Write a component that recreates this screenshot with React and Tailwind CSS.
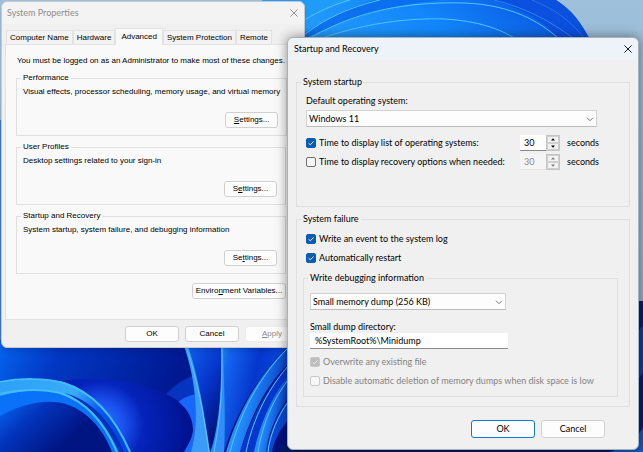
import React, { useState } from 'react';
import clsx from 'clsx';

const GROUPS = [
  { title: 'Performance', text: 'Visual effects, processor scheduling, memory usage, and virtual memory', label: ['', 'S', 'ettings...'] },
  { title: 'User Profiles', text: 'Desktop settings related to your sign-in', label: ['S', 'e', 'ttings...'] },
  { title: 'Startup and Recovery', text: 'System startup, system failure, and debugging information', label: ['Se', 't', 'tings...'] },
];

const TABS = ['Computer Name', 'Hardware', 'Advanced', 'System Protection', 'Remote'];

function Wallpaper() {
  return (
    <svg
      className="absolute inset-0 h-full w-full"
      viewBox="0 0 643 452"
      preserveAspectRatio="xMidYMid slice"
      aria-hidden="true"
    >
      <defs>
        <linearGradient id="sky" x1="0" y1="0" x2="0" y2="1">
          <stop offset="0" stopColor="#9fc0da" />
          <stop offset="1" stopColor="#8ea9bd" />
        </linearGradient>
        <linearGradient id="petal" x1="0" y1="0.6" x2="1" y2="0.4">
          <stop offset="0" stopColor="#2aa4fb" />
          <stop offset="0.55" stopColor="#1286fb" />
          <stop offset="1" stopColor="#0a4fdc" />
        </linearGradient>
        <linearGradient id="deep" x1="0" y1="0" x2="1" y2="0.15">
          <stop offset="0" stopColor="#0563ee" />
          <stop offset="0.2" stopColor="#0238c4" />
          <stop offset="0.6" stopColor="#001a94" />
          <stop offset="1" stopColor="#000a6c" />
        </linearGradient>
        <radialGradient id="lump" gradientUnits="userSpaceOnUse" cx="100" cy="425" r="96" gradientTransform="rotate(0)">
          <stop offset="0" stopColor="#2a7cff" />
          <stop offset="0.25" stopColor="#1a50ee" />
          <stop offset="0.45" stopColor="#0524bc" />
          <stop offset="1" stopColor="#000f88" />
        </radialGradient>
        <linearGradient id="ribbon" x1="0" y1="0" x2="1" y2="0.6">
          <stop offset="0" stopColor="#2da0f8" />
          <stop offset="0.5" stopColor="#38acf8" />
          <stop offset="0.75" stopColor="#0a58ec" />
          <stop offset="1" stopColor="#0348e8" />
        </linearGradient>
        <linearGradient id="hollow" x1="0" y1="0" x2="1" y2="0.5">
          <stop offset="0" stopColor="#0667f4" />
          <stop offset="0.35" stopColor="#0234bc" />
          <stop offset="0.8" stopColor="#001482" />
        </linearGradient>
        <linearGradient id="stem" x1="0" y1="0" x2="0.6" y2="1">
          <stop offset="0" stopColor="#1263ee" />
          <stop offset="0.5" stopColor="#0636cc" />
          <stop offset="1" stopColor="#001078" />
        </linearGradient>
        <linearGradient id="fan" x1="0" y1="0" x2="1" y2="0.3">
          <stop offset="0" stopColor="#3aa2fa" />
          <stop offset="0.25" stopColor="#1364ee" />
          <stop offset="0.6" stopColor="#0536cc" />
          <stop offset="1" stopColor="#0b4ee0" />
        </linearGradient>
        <linearGradient id="blade" x1="0" y1="0" x2="1" y2="0.4">
          <stop offset="0" stopColor="#4db4fc" />
          <stop offset="0.5" stopColor="#1f86f8" />
          <stop offset="1" stopColor="#0434c0" />
        </linearGradient>
      </defs>

      <rect width="643" height="452" fill="url(#sky)" />
      <path d="M0 120 L3 120 L3 452 L0 452Z" fill="#3e76c4" />

      {/* top bloom */}
      <path d="M262 0 H556 C572 10 582 24 590 40 V60 H262Z" fill="url(#petal)" />
      <path d="M304 0 H352 C334 6 318 13 304 20Z" fill="#1f9cf8" />
      <path d="M304 33 C330 17 352 6 374 0 H440 C380 6 345 20 304 39Z" fill="#0769ec" opacity="0.8" />
      <path d="M492 0 H556 C572 10 582 24 590 40 H560 C545 22 522 8 492 0Z" fill="#0b50de" />
      <g fill="none" stroke="#52c4ff" strokeWidth="1">
        <path d="M304 20 C318 12 332 5 350 0" />
        <path d="M304 35 C324 19 350 7 380 0" />
        <path d="M310 38 C365 6 420 2 465 3 C512 5 540 22 558 38" />
        <path d="M322 38 C370 22 410 18 445 19 C478 21 500 29 514 38" />
        <path d="M494 0 C524 7 552 22 573 38" stroke="#2d86f4" />
        <path d="M532 0 C555 9 572 22 584 38" stroke="#2574ec" />
      </g>

      {/* lower bloom */}
      <path d="M0 340 H300 V452 H0Z" fill="url(#deep)" />
      <path d="M166 394 C174 386 182 380 192 376 L200 400 L180 402Z" fill="#0633c0" />
      <path d="M177 403 C184 397 190 395 197 394 L210 452 H184 C196 434 192 414 177 403Z" fill="#1768fa" />
      <path d="M62 381 C90 376 130 380 155 390 C180 398 193 412 193 430 C192 440 187 447 182 452 H118Z" fill="url(#lump)" />
      <path d="M0 383 C20 379 45 378 64 383 C96 393 116 420 130 452 H0Z" fill="url(#ribbon)" />
      <path d="M64 393 C90 399 112 422 124 452 H117 C104 424 88 402 64 393Z" fill="#0230b8" />
      <path d="M0 396 C22 390 44 389 60 393 C90 402 106 424 119 452 H0Z" fill="#0a72f8" />
      <path d="M0 416 C24 402 50 399 66 404 C90 412 104 432 112 452 H0Z" fill="url(#hollow)" />
      <g fill="none" stroke="#43bdf8" strokeWidth="2">
        <path d="M0 382 C20 378 45 378 64 383 C96 393 116 420 130 452" />
        <path d="M0 394 C22 389 44 389 60 393 C88 402 105 424 117 452" />
      </g>

      <path d="M186 346 H222 C223 385 222 420 212 452 L204 440 C204 408 198 376 186 346Z" fill="url(#stem)" />
      <path d="M222 346 H288 C262 374 248 408 228 452 H210 C222 420 224 384 222 346Z" fill="url(#fan)" />
      <path d="M224 452 C236 412 258 376 288 346 V452Z" fill="#00127c" />
      <path d="M226 452 C238 412 258 376 288 346 V364 C262 390 248 424 240 452Z" fill="url(#blade)" />
      <path d="M240 452 C248 426 262 394 288 366 V378 C270 402 262 428 258 452Z" fill="#0637cc" />
      <path d="M254 452 C260 424 272 396 288 376 V398 C276 414 268 434 266 452Z" fill="url(#blade)" />
      <path d="M266 452 C270 432 278 412 288 400 V420 C280 430 274 440 272 452Z" fill="#0a48d4" />
      <path d="M184 346 H188 C198 376 204 410 210 452 H191 C200 424 196 380 184 346Z" fill="#3a9cf8" />
      <path d="M221 346 H223 C224 385 226 420 224 452 H211 C220 420 222 384 221 346Z" fill="#2f8ef8" />
      <g fill="none" stroke="#5ac8fc" strokeWidth="1">
        <path d="M186 346 C198 382 204 416 209 452" />
        <path d="M222 346 C222 384 222 410 214 452" />
        <path d="M288 348 C258 378 240 414 230 452" />
        <path d="M288 366 C264 394 252 424 246 452" />
        <path d="M288 380 C270 404 262 428 258 452" />
        <path d="M288 402 C278 416 270 434 268 452" />
      </g>

      {/* right edge */}
      <path d="M630 301 H643 V452 H630Z" fill="#02207e" />
      <path d="M630 340 C636 334 640 328 643 326 V372 C640 378 636 380 630 388Z" fill="#0a3fae" />
      <path d="M280 446 H643 V452 H280Z" fill="#021a66" />
      <path d="M610 452 C625 446 636 438 643 428 V452Z" fill="#1558c0" />
    </svg>
  );
}

function CloseButton({ className }) {
  return (
    <button type="button" aria-label="Close" className={clsx('flex items-center justify-center', className)}>
      <svg viewBox="0 0 8 8" className="h-2 w-2" fill="none" stroke="currentColor" strokeWidth="0.9">
        <path d="M0.4 0.4 L7.6 7.6 M7.6 0.4 L0.4 7.6" />
      </svg>
    </button>
  );
}

function Button({ className, children, ...props }) {
  return (
    <button
      type="button"
      className={clsx('flex items-center justify-center rounded-[3px] border bg-[#fdfdfd] whitespace-nowrap', className)}
      {...props}
    >
      {children}
    </button>
  );
}

function Check({ label, checked, disabled, onChange }) {
  return (
    <label className={clsx('flex items-center gap-[3px]', disabled && 'text-[#838383]')}>
      <span className="grid h-[10px] w-[10px] shrink-0">
        <input
          type="checkbox"
          checked={checked}
          disabled={disabled}
          onChange={e => onChange?.(e.target.checked)}
          className="col-start-1 row-start-1 appearance-none rounded-[2px] border border-[#707070] bg-[#f6f6f6] checked:border-[#0a5cb4] checked:bg-[#0a5cb4] disabled:border-[#c8c8c8] disabled:bg-[#f8f8f8] disabled:checked:bg-[#bdbdbd]"
        />
        {checked && (
          <svg viewBox="0 0 10 10" className="pointer-events-none col-start-1 row-start-1" fill="none" stroke="#e4eefa" strokeWidth="1">
            <path d="M2.6 5.2 L4.3 6.8 L7.5 3.5" />
          </svg>
        )}
      </span>
      <span>{label}</span>
    </label>
  );
}

function Select({ label, options, className }) {
  return (
    <div className={clsx('relative', className)}>
      <select
        aria-label={label}
        className="block h-[17px] w-full appearance-none rounded-[1px] border border-[#d2d2d2] border-b-[#bcbcbc] bg-[#fdfdfd] pl-[2px] leading-3"
      >
        {options.map(o => <option key={o}>{o}</option>)}
      </select>
      <svg viewBox="0 0 8 5" className="pointer-events-none absolute top-[7px] right-[3px] h-[5px] w-2" fill="none" stroke="#6a6a6a" strokeWidth="0.9">
        <path d="M1 0.7 L4 3.7 L7 0.7" />
      </svg>
    </div>
  );
}

function Spinner({ label, value, disabled, onChange }) {
  const step = d => onChange(Math.max(0, Number(value) + d));
  const arrow = clsx(
    'flex flex-1 items-center justify-center rounded-[1px] border border-[#cfcfcf] bg-[#f2f2f2]',
    disabled ? 'text-[#7c7c7c]' : 'text-black'
  );
  return (
    <div className="flex h-4 w-10 shrink-0">
      <input
        type="text"
        inputMode="numeric"
        aria-label={label}
        value={value}
        disabled={disabled}
        onChange={e => onChange(e.target.value)}
        className="w-[26px] border-b border-[#8a8a8a] bg-white pl-1 disabled:border-[#e4e4e4] disabled:bg-[#f5f5f5] disabled:text-[#8a8a8a]"
      />
      <div className="flex flex-1 flex-col border border-[#c4c4c4] bg-[#d4d4d4]">
        <button type="button" aria-label="Increase" disabled={disabled} onClick={() => step(1)} className={arrow}>
          <svg viewBox="0 0 4 3" className="h-[3px] w-1" fill="currentColor"><path d="M0 2.6 L2 0.3 L4 2.6Z" /></svg>
        </button>
        <button type="button" aria-label="Decrease" disabled={disabled} onClick={() => step(-1)} className={arrow}>
          <svg viewBox="0 0 4 3" className="h-[3px] w-1" fill="currentColor"><path d="M0 0.4 L2 2.7 L4 0.4Z" /></svg>
        </button>
      </div>
    </div>
  );
}

function SystemProperties() {
  const [tab, setTab] = useState('Advanced');

  return (
    <section className="absolute top-px left-px w-[304px] rounded-md border border-[#c4cad0] bg-[#f0f0f0] font-['Liberation_Sans',sans-serif] text-[8px] leading-3 text-black shadow-md">
      <header className="flex h-[22px] items-center justify-between rounded-t-md bg-[#f3f3f3] pr-[6px] pl-[5px]">
        <h1 className="font-[Lato,sans-serif] text-[9px] text-[#8c8c8c]">System Properties</h1>
        <CloseButton className="text-[#8c8c8c]" />
      </header>

      <div role="tablist" className="flex items-end pt-1 pl-1">
        {TABS.map(t => (
          <button
            key={t}
            type="button"
            role="tab"
            aria-selected={t === tab}
            onClick={() => setTab(t)}
            className={clsx(
              'border border-b-0 border-[#e2e2e2] whitespace-nowrap',
              t === tab ? '-mb-px h-[17px] bg-[#f9f9f9] px-[5px]' : 'h-[14px] bg-[#f3f3f3] px-[3px]'
            )}
          >
            {t}
          </button>
        ))}
      </div>

      <div className="mr-[3px] ml-[3px] border border-[#e2e2e2] bg-[#f9f9f9] pt-[10px] pr-[14px] pb-5 pl-[10px]">
        <p className="pl-px whitespace-nowrap">You must be logged on as an Administrator to make most of these changes.</p>
        <div className="mt-[5px] flex flex-col gap-[5px]">
          {GROUPS.map(g => (
            <fieldset key={g.title} className="border border-[#e0e0e0] px-[6px] pb-[7px]">
              <legend className="-ml-[2px] px-[2px]">{g.title}</legend>
              <p className="pt-[2px] whitespace-nowrap">{g.text}</p>
              <Button className="mt-[14px] mr-[2px] ml-auto h-4 w-[53px] border-[#d0d0d0]">
                <span>{g.label[0]}<u>{g.label[1]}</u>{g.label[2]}</span>
              </Button>
            </fieldset>
          ))}
        </div>
        <Button className="mt-[9px] ml-auto h-4 w-[94px] border-[#d0d0d0]">
          <span>Enviro<u>n</u>ment Variables...</span>
        </Button>
      </div>

      <footer className="flex justify-end gap-[6px] pt-[6px] pr-[5px] pb-[5px]">
        <Button className="h-4 w-[54px] border-[#d0d0d0]">OK</Button>
        <Button className="h-4 w-[54px] border-[#d0d0d0]">Cancel</Button>
        <Button disabled className="h-4 w-[54px] border-[#ececec] bg-[#f5f5f5] text-[#8c8c8c]">
          <span><u>A</u>pply</span>
        </Button>
      </footer>
    </section>
  );
}

function StartupAndRecovery() {
  const [showList, setShowList] = useState(true);
  const [showRecovery, setShowRecovery] = useState(false);
  const [listTime, setListTime] = useState(30);
  const [recoveryTime, setRecoveryTime] = useState(30);
  const [logEvent, setLogEvent] = useState(true);
  const [restart, setRestart] = useState(true);
  const [directory, setDirectory] = useState('%SystemRoot%\\Minidump');

  return (
    <section className="absolute top-[37px] left-[287px] w-[352px] rounded-md border border-[#a9b0b6] bg-[#f0f0f0] font-[Lato,sans-serif] text-[9px] leading-3 text-black shadow-[0_0_12px_rgba(0,0,0,0.45)]">
      <header className="flex h-[22px] items-center justify-between rounded-t-md bg-[#eef3f9] pr-[6px] pl-[6px]">
        <h2>Startup and Recovery</h2>
        <CloseButton className="text-black" />
      </header>

      <div className="px-2 pt-4">
        <fieldset className="border border-[#dfdfdf] px-[9px] pb-9">
          <legend className="-ml-[5px] px-[2px]">System startup</legend>
          <p className="pt-[7px]">Default operating system:</p>
          <Select label="Default operating system" options={['Windows 11']} className="mt-[3px] mr-[23px]" />
          <div className="mt-2 flex h-4 items-center">
            <Check label="Time to display list of operating systems:" checked={showList} onChange={setShowList} />
            <div className="mr-[21px] ml-auto flex items-center gap-[7px]">
              <Spinner label="List time in seconds" value={listTime} disabled={!showList} onChange={setListTime} />
              <span>seconds</span>
            </div>
          </div>
          <div className="mt-[3px] flex h-4 items-center">
            <Check label="Time to display recovery options when needed:" checked={showRecovery} onChange={setShowRecovery} />
            <div className="mr-[21px] ml-auto flex items-center gap-[7px]">
              <Spinner label="Recovery time in seconds" value={recoveryTime} disabled={!showRecovery} onChange={setRecoveryTime} />
              <span>seconds</span>
            </div>
          </div>
        </fieldset>

        <fieldset className="mt-[6px] border border-[#dfdfdf] pr-[11px] pb-[9px] pl-[6px]">
          <legend className="-ml-[2px] px-[2px]">System failure</legend>
          <div className="flex flex-col gap-[7px] pt-2 pl-[3px]">
            <Check label="Write an event to the system log" checked={logEvent} onChange={setLogEvent} />
            <Check label="Automatically restart" checked={restart} onChange={setRestart} />
          </div>
          <fieldset className="mt-2 border border-[#dfdfdf] px-[6px] pb-[9px]">
            <legend className="-ml-[2px] px-[2px]">Write debugging information</legend>
            <Select label="Write debugging information" options={['Small memory dump (256 KB)']} className="mt-[9px] w-[196px]" />
            <label htmlFor="dump-dir" className="mt-[11px] block">Small dump directory:</label>
            <input
              id="dump-dir"
              type="text"
              value={directory}
              onChange={e => setDirectory(e.target.value)}
              className="block h-4 w-[198px] border-b border-[#8a8a8a] bg-white pl-[5px]"
            />
            <div className="mt-[7px] flex flex-col gap-[7px]">
              <Check label="Overwrite any existing file" checked disabled />
              <Check label="Disable automatic deletion of memory dumps when disk space is low" checked={false} disabled />
            </div>
          </fieldset>
        </fieldset>
      </div>

      <footer className="flex justify-end gap-[6px] pt-[13px] pr-[33px] pb-[11px]">
        <Button className="h-[18px] w-16 border-[#0f78d4]">OK</Button>
        <Button className="h-[18px] w-16 border-[#d0d0d0]">Cancel</Button>
      </footer>
    </section>
  );
}

export default function App() {
  return (
    <main className="relative min-h-screen overflow-hidden bg-[#9dbcd4]">
      <Wallpaper />
      <SystemProperties />
      <StartupAndRecovery />
    </main>
  );
}
